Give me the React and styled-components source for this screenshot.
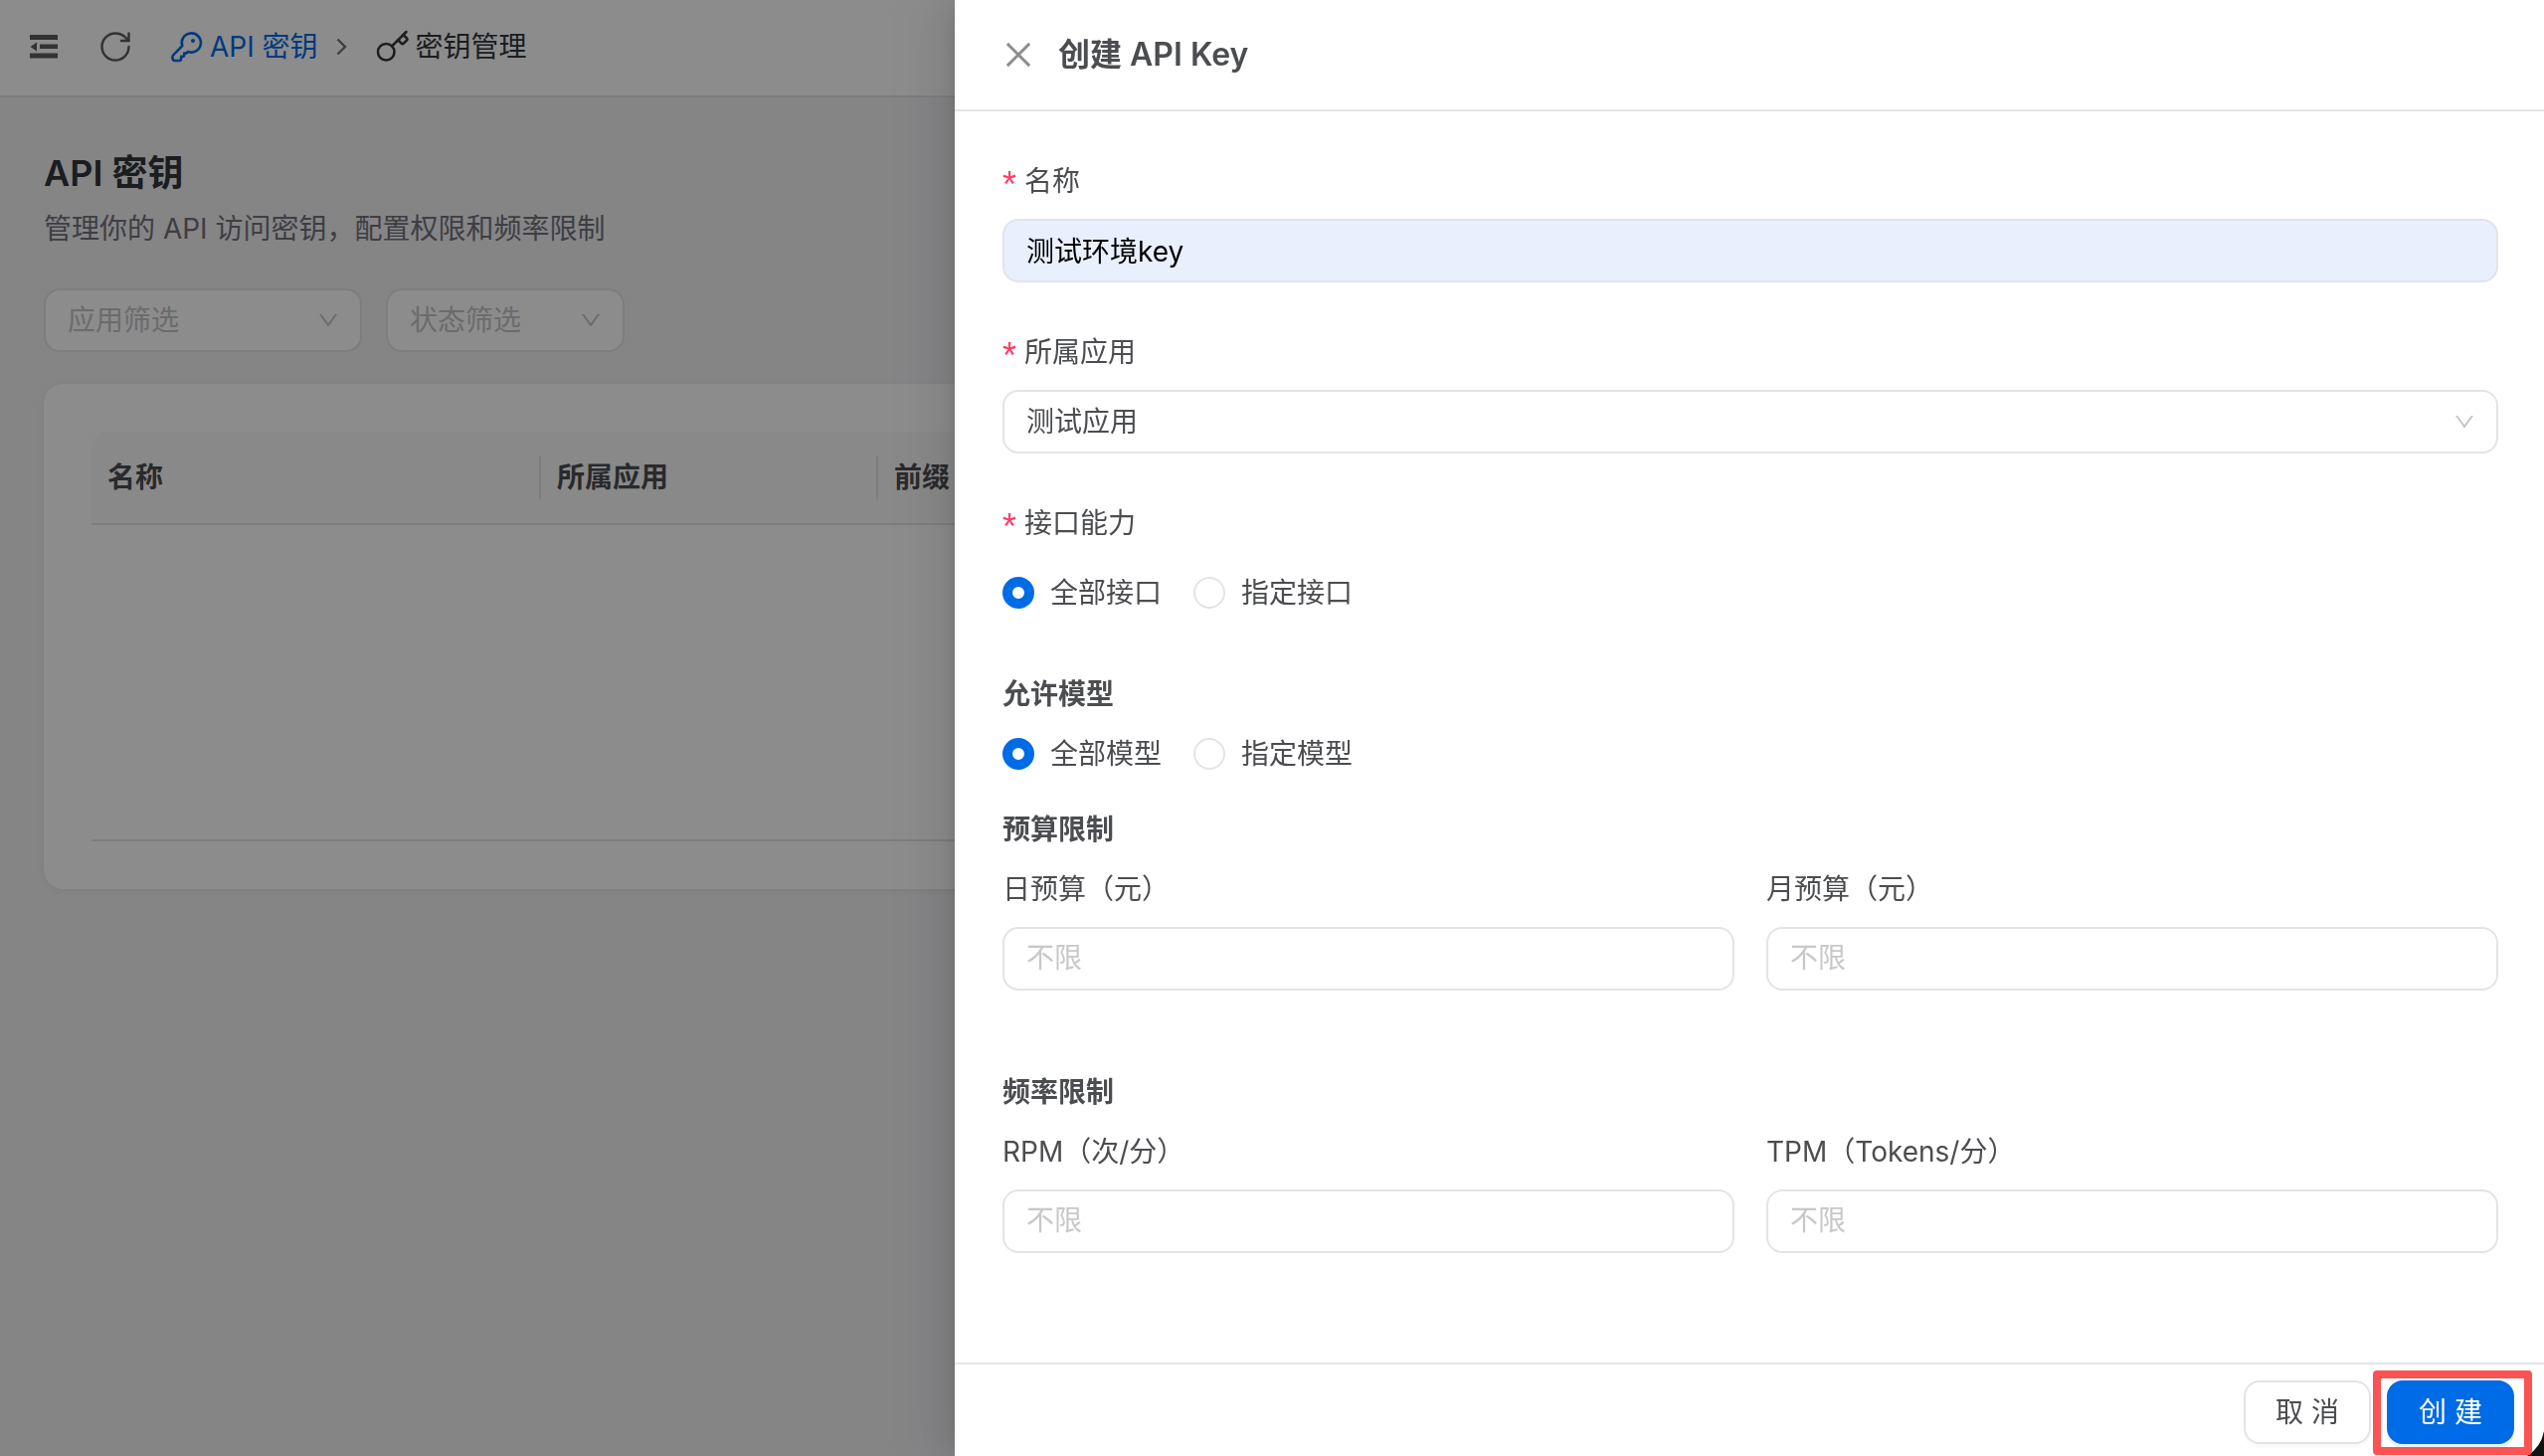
import React, { useState } from 'react';
import styled, { createGlobalStyle } from 'styled-components';
import { AiOutlineClose, AiOutlineDown } from 'react-icons/ai';
import { Key, RotateCw } from 'lucide-react';

const GlobalStyle = createGlobalStyle`
    * {
        box-sizing: border-box;
    }
    body {
        margin: 0;
        background-color: #f2f2f5;
        color: #323639;
        font-family: Inter, "Noto Sans CJK SC", sans-serif;
        font-size: 28px;
        line-height: 44px;
        overflow: hidden;
    }
    button, input, select {
        font: inherit;
        color: inherit;
        margin: 0;
    }
    h1, h2, h3, p {
        margin: 0;
    }
`;

const Page = styled.div`
    min-height: 100vh;
`;

const TopBar = styled.header`
    display: flex;
    align-items: center;
    height: 98px;
    padding: 0 26px 2px;
    background-color: white;
    border-bottom: 2px solid #e4e4e7;
`;

const IconButton = styled.button`
    display: flex;
    align-items: center;
    justify-content: center;
    width: 36px;
    height: 36px;
    padding: 0;
    border: none;
    background: none;
    color: ${({ $muted }) => ($muted ? '#8c8c8f' : '#5a5d60')};
    cursor: pointer;
`;

const Tools = styled.div`
    display: flex;
    gap: 36px;
    margin-right: 36px;
`;

const Breadcrumb = styled.nav`
    display: flex;
    align-items: center;
    .separator {
        margin: 0 28px 0 18px;
        color: #71717a;
    }
`;

const Crumb = styled.a`
    display: flex;
    align-items: center;
    gap: 5px;
    color: ${({ $current }) => ($current ? '#323639' : '#006be6')};
    text-decoration: none;
`;

const Content = styled.main`
    padding: 48px 44px;
    h1 {
        font-size: 36px;
        line-height: 56px;
        font-weight: 600;
    }
    p {
        margin-top: 6px;
        color: #71717a;
    }
`;

const Filters = styled.div`
    display: flex;
    gap: 24px;
    margin: 38px 0 32px;
`;

const SelectBox = styled.div`
    position: relative;
    width: ${({ $width }) => $width || '100%'};
    select {
        appearance: none;
        width: 100%;
        height: 64px;
        padding: 0 64px 0 22px;
        border: 2px solid #e4e4e7;
        border-radius: 16px;
        background-color: white;
        color: ${({ $empty }) => ($empty ? '#c4c4c6' : '#4b4d50')};
    }
    svg {
        position: absolute;
        right: 22px;
        top: 20px;
        color: #c4c4c6;
        pointer-events: none;
    }
`;

const Card = styled.section`
    padding: 48px;
    border-radius: 20px;
    background-color: white;
    box-shadow: 0 2px 8px rgba(0, 0, 0, 0.06);
`;

const KeyTable = styled.table`
    width: 100%;
    table-layout: fixed;
    border-collapse: separate;
    border-spacing: 0;
    thead tr {
        height: 94px;
    }
    th {
        padding: 24px 0;
        background-color: #fafafa;
        border-bottom: 2px solid #e4e4e7;
        text-align: left;
        font-weight: 600;
        color: #4b4d50;
    }
    th:first-child {
        border-top-left-radius: 16px;
    }
    th span {
        display: block;
        padding: 0 16px;
        border-right: 2px solid #e4e4e7;
    }
    th:last-child span {
        border-right: none;
    }
    td {
        height: 318px;
        border-bottom: 2px solid #e4e4e7;
    }
`;

const Mask = styled.div`
    position: fixed;
    inset: 0;
    background-color: rgba(0, 0, 0, 0.45);
`;

const DrawerPanel = styled.aside`
    position: fixed;
    top: 0;
    right: 0;
    bottom: 0;
    display: flex;
    flex-direction: column;
    width: min(1598px, 100%);
    background-color: white;
    color: #4b4d50;
    box-shadow: -12px 0 32px rgba(0, 0, 0, 0.08), -6px 0 12px -8px rgba(0, 0, 0, 0.12), -18px 0 56px 16px rgba(0, 0, 0, 0.05);
`;

const DrawerHeader = styled.header`
    display: flex;
    align-items: center;
    gap: 22px;
    height: 112px;
    padding: 0 46px;
    border-bottom: 2px solid #e4e4e7;
    h2 {
        font-size: 32px;
        line-height: 48px;
        font-weight: 600;
    }
`;

const DrawerBody = styled.form`
    flex: 1;
    padding: 48px 46px 48px 48px;
    overflow: hidden;
`;

const Field = styled.div`
    display: flex;
    flex-direction: column;
    gap: 16px;
    margin-bottom: 48px;
`;

const Label = styled.label`
    display: flex;
    gap: 8px;
    .required {
        height: 44px;
        color: #ff3b64;
        font-family: "Liberation Sans", sans-serif;
        font-size: 36px;
        line-height: 52px;
    }
`;

const TextInput = styled.input`
    width: 100%;
    height: 64px;
    padding: 0 22px 2px;
    border: 2px solid #e4e4e7;
    border-radius: 16px;
    background-color: ${({ $filled }) => ($filled ? '#e8f0fe' : 'white')};
    color: ${({ $filled }) => ($filled ? 'black' : '#4b4d50')};
    outline: none;
    &::placeholder {
        color: #c8c8ca;
        opacity: 1;
    }
`;

const RadioGroup = styled.div`
    display: flex;
    align-items: center;
    gap: 32px;
    min-height: ${({ $tall }) => ($tall ? '64px' : '44px')};
    label {
        display: flex;
        align-items: center;
        gap: 16px;
    }
    input {
        appearance: none;
        width: 32px;
        height: 32px;
        border: 2px solid #e4e4e7;
        border-radius: 50%;
        background-color: white;
    }
    input:checked {
        border: 10px solid #006be6;
    }
`;

const Section = styled.section`
    display: flex;
    flex-direction: column;
    gap: 16px;
    margin-bottom: 32px;
    h3 {
        font-size: 28px;
        font-weight: 600;
    }
`;

const Columns = styled.div`
    display: grid;
    grid-template-columns: 1fr 1fr;
    gap: 32px;
`;

const DrawerFooter = styled.footer`
    display: flex;
    justify-content: flex-end;
    gap: 16px;
    padding: 16px 30px 12px;
    border-top: 2px solid #e4e4e7;
`;

const Button = styled.button`
    min-width: 128px;
    height: 64px;
    padding: 0 28px;
    border: 2px solid ${({ $primary }) => ($primary ? '#006be6' : '#e4e4e7')};
    border-radius: 16px;
    background-color: ${({ $primary }) => ($primary ? '#006be6' : 'white')};
    color: ${({ $primary }) => ($primary ? 'white' : '#4b4d50')};
    box-shadow: 0 4px 0 ${({ $primary }) => ($primary ? 'rgba(5, 125, 255, 0.1)' : 'rgba(0, 0, 0, 0.02)')};
    cursor: pointer;
`;

const Highlight = styled.div`
    position: relative;
    z-index: 1;
    &::after {
        content: '';
        position: absolute;
        inset: -10px -18px -11px -14px;
        border: 8px solid #fb5252;
        border-radius: 4px;
        pointer-events: none;
    }
`;

const WindowCorner = styled.svg`
    position: absolute;
    right: 0;
    bottom: 0;
`;

const FoldIcon = () => (
    <svg width="36" height="36" viewBox="0 0 36 36" fill="currentColor">
        <path d="M4 6h28v5H4zM14 15.500h18v4.500H14zM4 24.500h28v5H4zM11 13.500v9L4.500 18z" />
    </svg>
);

const KeyOutlineIcon = () => (
    <svg width="36" height="36" viewBox="0 0 36 36" fill="none" stroke="currentColor" strokeWidth="2.600" strokeLinejoin="round">
        <path d="M13.300 17.200A9.600 9.600 0 1 1 19 23l-1.600 1.500h-2.200v2.200q0 1-1 1h-2v2q0 2.300-2.300 2.300H6q-2.500 0-2.500-2.500v-1.300q0-1.200.9-2.100z" />
        <circle cx="24" cy="12" r="2" fill="currentColor" stroke="none" />
    </svg>
);

const ChevronIcon = () => (
    <svg className="separator" width="11" height="18" viewBox="0 0 11 18" fill="none" stroke="currentColor" strokeWidth="2.400">
        <path d="M1.500 1.500 9 9l-7.500 7.500" />
    </svg>
);

function Select({ label, id, options, width, empty }) {
    return (
        <SelectBox $width={width} $empty={empty}>
            <select id={id} aria-label={label}>
                {options.map((option) => (
                    <option key={option}>{option}</option>
                ))}
            </select>
            <AiOutlineDown size={24} />
        </SelectBox>
    );
}

function Radios({ name, options, tall }) {
    const [value, setValue] = useState(options[0]);

    return (
        <RadioGroup role="radiogroup" $tall={tall}>
            {options.map((option) => (
                <label key={option}>
                    <input
                        type="radio"
                        name={name}
                        checked={value === option}
                        onChange={() => setValue(option)}
                    />
                    {option}
                </label>
            ))}
        </RadioGroup>
    );
}

function LimitField({ id, label }) {
    return (
        <Field>
            <Label htmlFor={id}>{label}</Label>
            <TextInput id={id} placeholder="不限" />
        </Field>
    );
}

function CreateKeyDrawer() {
    const [name, setName] = useState('测试环境key');

    return (
        <DrawerPanel>
            <DrawerHeader>
                <IconButton $muted aria-label="关闭">
                    <AiOutlineClose size={36} />
                </IconButton>
                <h2>创建 API Key</h2>
            </DrawerHeader>
            <DrawerBody id="create-key" onSubmit={(e) => e.preventDefault()}>
                <Field>
                    <Label htmlFor="name"><span className="required">*</span>名称</Label>
                    <TextInput id="name" $filled value={name} onChange={(e) => setName(e.target.value)} />
                </Field>
                <Field>
                    <Label htmlFor="app"><span className="required">*</span>所属应用</Label>
                    <Select id="app" options={['测试应用']} />
                </Field>
                <Field>
                    <Label as="div"><span className="required">*</span>接口能力</Label>
                    <Radios tall name="scope" options={['全部接口', '指定接口']} />
                </Field>
                <Section>
                    <h3>允许模型</h3>
                    <Radios name="models" options={['全部模型', '指定模型']} />
                </Section>
                <Section>
                    <h3>预算限制</h3>
                    <Columns>
                        <LimitField id="day" label="日预算（元）" />
                        <LimitField id="month" label="月预算（元）" />
                    </Columns>
                </Section>
                <Section>
                    <h3>频率限制</h3>
                    <Columns>
                        <LimitField id="rpm" label="RPM（次/分）" />
                        <LimitField id="tpm" label="TPM（Tokens/分）" />
                    </Columns>
                </Section>
            </DrawerBody>
            <DrawerFooter>
                <Button type="button">取 消</Button>
                <Highlight>
                    <Button $primary type="submit" form="create-key">创 建</Button>
                </Highlight>
            </DrawerFooter>
            {/* dark edge of the rounded window */}
            <WindowCorner width="30" height="30" viewBox="0 0 30 30">
                <path d="M30 5Q27 21 13 30h17z" fill="#111214" />
            </WindowCorner>
        </DrawerPanel>
    );
}

export default function App() {
    return (
        <Page>
            <GlobalStyle />
            <TopBar>
                <Tools>
                    <IconButton aria-label="折叠菜单"><FoldIcon /></IconButton>
                    <IconButton aria-label="刷新"><RotateCw size={36} strokeWidth={1.6} /></IconButton>
                </Tools>
                <Breadcrumb>
                    <Crumb href="#keys"><KeyOutlineIcon />API 密钥</Crumb>
                    <ChevronIcon />
                    <Crumb href="#manage" $current><Key size={36} strokeWidth={1.7} />密钥管理</Crumb>
                </Breadcrumb>
            </TopBar>
            <Content>
                <h1>API 密钥</h1>
                <p>管理你的 API 访问密钥，配置权限和频率限制</p>
                <Filters>
                    <Select empty label="应用筛选" width="320px" options={['应用筛选']} />
                    <Select empty label="状态筛选" width="240px" options={['状态筛选']} />
                </Filters>
                <Card>
                    <KeyTable>
                        <colgroup>
                            <col width="452" />
                            <col width="339" />
                            <col />
                        </colgroup>
                        <thead>
                            <tr>
                                <th><span>名称</span></th>
                                <th><span>所属应用</span></th>
                                <th><span>前缀</span></th>
                            </tr>
                        </thead>
                        <tbody>
                            <tr>
                                <td colSpan={3} />
                            </tr>
                        </tbody>
                    </KeyTable>
                </Card>
            </Content>
            <Mask />
            <CreateKeyDrawer />
        </Page>
    );
}
